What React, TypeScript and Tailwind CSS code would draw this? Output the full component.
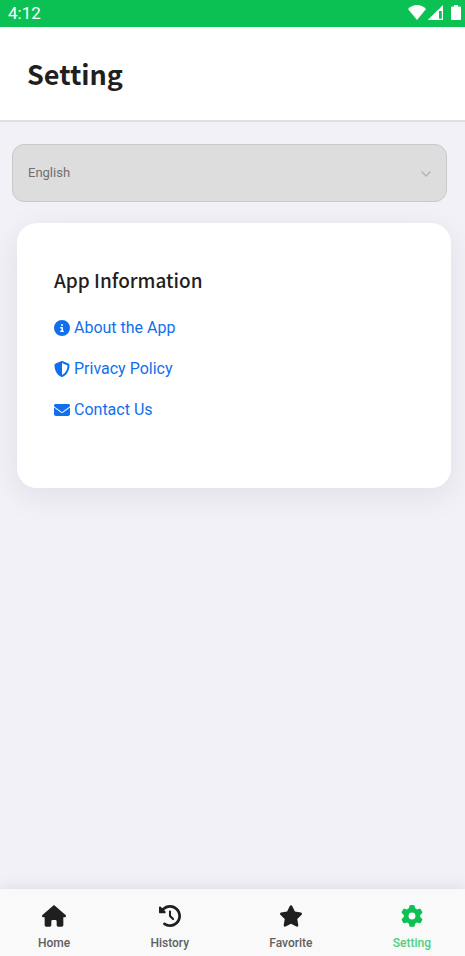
import { FaCircleInfo, FaClockRotateLeft, FaEnvelope, FaGear, FaHouse, FaShieldHalved, FaStar } from "react-icons/fa6";

const links = [
  { label: "About the App", icon: FaCircleInfo },
  { label: "Privacy Policy", icon: FaShieldHalved },
  { label: "Contact Us", icon: FaEnvelope },
];

const tabs = [
  { label: "Home", icon: FaHouse, active: false },
  { label: "History", icon: FaClockRotateLeft, active: false },
  { label: "Favorite", icon: FaStar, active: false },
  { label: "Setting", icon: FaGear, active: true },
];

function StatusBar() {
  return (
    <div className="flex h-[27px] items-center justify-between bg-[#0cc154] pl-2 pr-1 text-white">
      <span className="pb-[2px] text-[17px] leading-6">4:12</span>
      <div className="flex items-center gap-[2px] pb-[2px]" aria-hidden="true">
        <svg className="h-[15px] w-[18px]" viewBox="0 0 18 15" fill="currentColor">
          <path d="M9 15 0 4C5-1.200 13-1.200 18 4Z" />
        </svg>
        <svg className="h-[15px] w-[15px]" viewBox="0 0 15 15" fill="currentColor">
          <path fillRule="evenodd" d="M15 0v15H0L15 0ZM13.800 3v3H11v7.800h2.800V3Z" />
          <path d="M10 5v10H0Z" />
        </svg>
        <svg className="ml-[6px] h-[15px] w-[10px]" viewBox="0 0 10 15" fill="currentColor">
          <path d="M3 0h4v1.500h2a1 1 0 0 1 1 1V14a1 1 0 0 1-1 1H1a1 1 0 0 1-1-1V2.500a1 1 0 0 1 1-1h2Z" />
        </svg>
      </div>
    </div>
  );
}

export default function App() {
  return (
    <div className="flex min-h-screen flex-col bg-[#f2f1f7] font-['Roboto',sans-serif]">
      <StatusBar />
      <header className="border-b-2 border-[#dfdfe3] bg-white px-[27px] py-6">
        <h1 className="font-['Noto_Sans_CJK_SC',sans-serif] text-[27px] font-bold leading-[45px] text-[#1f1f1f]">Setting</h1>
      </header>

      <main className="flex-1">
        <div className="ml-3 mr-[18px] mt-[22px] grid items-center">
          <select
            aria-label="Language"
            className="col-start-1 row-start-1 h-[58px] w-full appearance-none rounded-xl border border-[#c9c9cd] bg-[#dddddd] px-[15px] text-[13px] text-[#6f6f6f]"
          >
            <option>English</option>
          </select>
          <svg
            className="pointer-events-none col-start-1 row-start-1 mr-4 mt-[2px] h-[6px] w-[10px] justify-self-end text-[#b4b4b4]"
            viewBox="0 0 10 6"
            fill="none"
            stroke="currentColor"
            strokeWidth="1.500"
            strokeLinecap="round"
            strokeLinejoin="round"
            aria-hidden="true"
          >
            <path d="m1 1 4 4 4-4" />
          </svg>
        </div>

        <section className="ml-[17px] mr-[14px] mt-[21px] rounded-[20px] bg-white px-[37px] pb-[66px] pt-10 shadow-[0_8px_32px_rgba(30,30,60,0.080)]">
          <h2 className="font-['Noto_Sans_CJK_SC',sans-serif] text-[19px] font-medium leading-[33px] text-[#1f1f1f]">App Information</h2>
          <ul className="mt-5 flex flex-col gap-[17px]">
            {links.map(({ label, icon: Icon }) => (
              <li key={label}>
                <a href="#" className="inline-flex items-center gap-1 align-top text-base leading-6 text-[#116fee]">
                  <Icon className="size-4" aria-hidden="true" />
                  {label}
                </a>
              </li>
            ))}
          </ul>
        </section>
      </main>

      <nav className="flex h-[67px] items-start justify-between bg-[#f9f9f9] pl-[38px] pr-[34px] pt-4 shadow-[0_0_16px_rgba(30,30,60,0.120)]">
        {tabs.map(({ label, icon: Icon, active }) => (
          <a
            key={label}
            href="#"
            aria-current={active ? "page" : undefined}
            className={
              active
                ? "flex flex-col items-center gap-2 text-[#0cc154]"
                : "flex flex-col items-center gap-2 text-[#1f1f1f]"
            }
          >
            <Icon className="h-[22px] w-6" aria-hidden="true" />
            <span className={active ? "text-xs font-medium leading-4 text-[#4fce7f]" : "text-xs font-medium leading-4 text-[#606060]"}>
              {label}
            </span>
          </a>
        ))}
      </nav>
    </div>
  );
}
